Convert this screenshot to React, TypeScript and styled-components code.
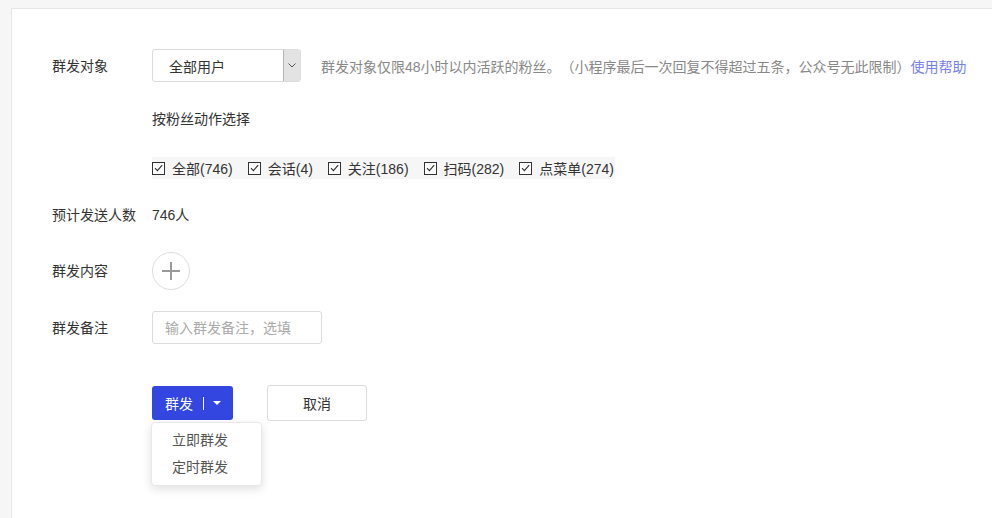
import React from 'react';
import styled, { createGlobalStyle } from 'styled-components';

const GlobalStyle = createGlobalStyle`
  html, body {
    margin: 0;
    padding: 0;
    background: #f6f6f6;
    overflow: hidden;
  }
  body {
    font-family: "Liberation Sans", "Noto Sans CJK SC", sans-serif;
    font-size: 14px;
    color: #333;
    text-spacing-trim: space-all;
  }
`;

const actions = [
  { name: '全部', count: 746 },
  { name: '会话', count: 4 },
  { name: '关注', count: 186 },
  { name: '扫码', count: 282 },
  { name: '点菜单', count: 274 },
];

const Page = styled.div`
  padding: 8px 0 0 11px;
  height: 518px;
  box-sizing: border-box;
  overflow: hidden;
`;

const Panel = styled.div`
  width: 1000px;
  height: 540px;
  background: #fff;
  border: 1px solid #e6e6e6;
  box-sizing: border-box;
  padding: 40px 0 0 40px;
`;

const Row = styled.div<{ $gap: number }>`
  display: flex;
  align-items: center;
  margin-top: ${({ $gap }) => $gap}px;
`;

const Label = styled.div`
  width: 100px;
  flex-shrink: 0;
  line-height: 20px;
  color: #333;
`;

const Select = styled.div`
  width: 149px;
  height: 33px;
  box-sizing: border-box;
  border: 1px solid #dcdcdc;
  border-radius: 3px;
  display: flex;
  align-items: stretch;
  padding-left: 16px;
`;

const SelectValue = styled.span`
  flex: 1;
  display: flex;
  align-items: center;
`;

const SelectArrow = styled.span`
  width: 16px;
  background: #e3e3e3;
  border-left: 1px solid #b5b5b5;
  border-radius: 0 2px 2px 0;
  display: flex;
  align-items: center;
  justify-content: center;
`;

const Hint = styled.span`
  margin-left: 20px;
  color: #888;
  white-space: nowrap;
`;

const HelpLink = styled.a`
  color: #7580f2;
  text-decoration: none;
`;

const Plain = styled.span`
  line-height: 20px;
  color: #333;
`;

const CheckBar = styled.div`
  display: flex;
  align-items: center;
  gap: 15px;
  height: 22px;
  background: #f6f6f6;
  padding-right: 1px;
`;

const CheckItem = styled.label`
  display: flex;
  align-items: center;
  gap: 7px;
  white-space: nowrap;
`;

const Box = styled.span`
  width: 13px;
  height: 13px;
  box-sizing: border-box;
  border: 1px solid #333;
  background: #fff;
  display: flex;
  align-items: center;
  justify-content: center;
`;

const AddCircle = styled.button`
  width: 38px;
  height: 38px;
  border-radius: 50%;
  border: 1px solid #dedede;
  background: #fff;
  padding: 0;
  display: flex;
  align-items: center;
  justify-content: center;
  cursor: pointer;
`;

const Input = styled.input`
  width: 170px;
  height: 33px;
  box-sizing: border-box;
  border: 1px solid #dcdcdc;
  border-radius: 3px;
  padding: 0 12px;
  font: inherit;
  color: #333;
  outline: none;

  &::placeholder {
    color: #aaa;
  }
`;

const Actions = styled.div`
  display: flex;
  align-items: center;
  gap: 34px;
  margin-left: 100px;
`;

const SplitWrap = styled.div`
  position: relative;
`;

const SendButton = styled.button`
  width: 81px;
  height: 34px;
  border: none;
  border-radius: 3px;
  background: #3347e0;
  color: #fff;
  font: inherit;
  display: flex;
  align-items: center;
  padding: 0 0 0 13px;
  cursor: pointer;
`;

const Divider = styled.span`
  width: 1px;
  height: 13px;
  background: #fff;
  margin: 0 9px 0 10px;
`;

const Caret = styled.span`
  width: 0;
  height: 0;
  border-left: 4px solid transparent;
  border-right: 4px solid transparent;
  border-top: 4px solid #fff;
`;

const CancelButton = styled.button`
  width: 100px;
  height: 36px;
  border: 1px solid #dcdcdc;
  border-radius: 3px;
  background: #fff;
  color: #333;
  font: inherit;
  cursor: pointer;
`;

const Menu = styled.div`
  position: absolute;
  left: -1px;
  top: 36px;
  width: 111px;
  box-sizing: border-box;
  padding: 4px 0;
  background: #fff;
  border: 1px solid #e8e8e8;
  border-radius: 4px;
  box-shadow: 0 3px 10px rgba(0, 0, 0, 0.13);
`;

const MenuItem = styled.div`
  padding-left: 20px;
  line-height: 27px;
  color: #555;
  cursor: pointer;
`;

const CheckMark = () => (
  <svg width="9" height="8" viewBox="0 0 9 8">
    <path d="M1 4.2 L3.4 6.6 L8.2 1.2" fill="none" stroke="#333" strokeWidth="1.2" />
  </svg>
);

const App = () => {
  return (
    <>
      <GlobalStyle />
      <Page>
        <Panel>
          <Row $gap={0}>
            <Label>群发对象</Label>
            <Select>
              <SelectValue>全部用户</SelectValue>
              <SelectArrow>
                <svg width="8" height="5" viewBox="0 0 8 5">
                  <path d="M0.5 0.5 L4 4 L7.5 0.5" fill="none" stroke="#555" strokeWidth="1" />
                </svg>
              </SelectArrow>
            </Select>
            <Hint>
              群发对象仅限48小时以内活跃的粉丝。（小程序最后一次回复不得超过五条，公众号无此限制）
              <HelpLink href="#">使用帮助</HelpLink>
            </Hint>
          </Row>

          <Row $gap={27}>
            <Label />
            <Plain>按粉丝动作选择</Plain>
          </Row>

          <Row $gap={28}>
            <Label />
            <CheckBar>
              {actions.map((a) => (
                <CheckItem key={a.name}>
                  <Box>
                    <CheckMark />
                  </Box>
                  {a.name}({a.count})
                </CheckItem>
              ))}
            </CheckBar>
          </Row>

          <Row $gap={26}>
            <Label>预计发送人数</Label>
            <Plain>746人</Plain>
          </Row>

          <Row $gap={27}>
            <Label>群发内容</Label>
            <AddCircle>
              <svg width="20" height="20" viewBox="0 0 20 20">
                <path d="M10 1 V19 M1 10 H19" stroke="#9a9a9a" strokeWidth="2" />
              </svg>
            </AddCircle>
          </Row>

          <Row $gap={21}>
            <Label>群发备注</Label>
            <Input placeholder="输入群发备注，选填" />
          </Row>

          <Row $gap={41}>
            <Actions>
              <SplitWrap>
                <SendButton>
                  群发
                  <Divider />
                  <Caret />
                </SendButton>
                <Menu>
                  <MenuItem>立即群发</MenuItem>
                  <MenuItem>定时群发</MenuItem>
                </Menu>
              </SplitWrap>
              <CancelButton>取消</CancelButton>
            </Actions>
          </Row>
        </Panel>
      </Page>
    </>
  );
};

export default App;
